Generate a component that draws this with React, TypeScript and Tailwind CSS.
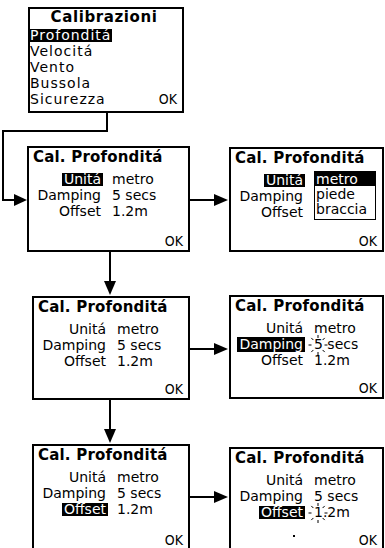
import type { ReactNode } from 'react';

const ff = "font-['DejaVu_Sans',sans-serif]";

type BoxProps = { pos: string; children: ReactNode };

const Box = ({ pos, children }: BoxProps) => (
  <div className={`absolute border-2 border-black bg-white flex flex-col text-black ${pos}`}>{children}</div>
);

const Title = () => (
  <div className="pl-[4px] pt-[1px] text-[15px] leading-[16px] font-bold tracking-[0.2px]">Cal. Profonditá</div>
);

const Ok = () => (
  <div className="mt-auto self-end pr-[5px] pb-[1px] text-[14px] leading-[16px] [font-stretch:condensed]">OK</div>
);

// little "blinking" rays round the digit being edited
const Blink = ({ ch }: { ch: string }) => (
  <span className="relative inline-block">
    {ch}
    <svg className="absolute left-1/2 top-[9px] -translate-x-1/2 -translate-y-1/2" width="22" height="22" viewBox="-11 -11 22 22">
      {[0, 45, 90, 135, 180, 225, 270, 315].map((a) => {
        const r = (a * Math.PI) / 180;
        return (
          <line
            key={a}
            x1={Math.cos(r) * 6.5}
            y1={Math.sin(r) * 7}
            x2={Math.cos(r) * 9.5}
            y2={Math.sin(r) * 10}
            stroke="#000"
            strokeWidth="1"
          />
        );
      })}
    </svg>
  </span>
);

type Field = 'unit' | 'damp' | 'off' | null;

const Label = ({ text, on, tall }: { text: string; on: boolean; tall?: boolean }) => (
  <span
    className={`inline-block px-[2px] ${tall ? 'leading-[15px] h-[15px]' : 'leading-[13px] h-[13px]'} ${on ? 'bg-black text-white' : ''}`}
  >
    {text}
  </span>
);

const Fields = ({ hl, blink }: { hl: Field; blink?: 'damp' | 'off' }) => (
  <div className="mt-[6px] grid grid-cols-[74px_auto] gap-x-[9px] text-[14px] leading-[16px]">
    <div className="text-right"><Label text="Unitá" on={hl === 'unit'} /></div>
    <div>metro</div>
    <div className="text-right"><Label text="Damping" on={hl === 'damp'} tall /></div>
    <div>{blink === 'damp' ? <Blink ch="5" /> : '5'} secs</div>
    <div className="text-right"><Label text="Offset" on={hl === 'off'} /></div>
    <div>{blink === 'off' ? <Blink ch="1" /> : '1'}.2m</div>
  </div>
);

const Dropdown = () => (
  <div className="mt-[6px] grid grid-cols-[74px_auto] gap-x-[9px] text-[14px] leading-[16px]">
    <div className="flex flex-col items-end">
      <div><Label text="Unitá" on /></div>
      <div><Label text="Damping" on={false} tall /></div>
      <div><Label text="Offset" on={false} /></div>
    </div>
    <div className="w-[62px] border-[1.5px] border-black flex flex-col -mt-[1px]">
      <div className="bg-black text-white pl-[1px] leading-[14px]">metro</div>
      <div className="pl-[1px] leading-[16px]">piede</div>
      <div className="pl-[1px] leading-[15px]">braccia</div>
    </div>
  </div>
);

export default function App() {
  return (
    <div className={`relative w-[385px] h-[548px] overflow-hidden bg-white ${ff}`}>
      {/* connectors */}
      <svg className="absolute inset-0" width="385" height="548" viewBox="0 0 385 548">
        <g stroke="#000" strokeWidth="2" fill="none">
          <polyline points="107,113 107,131 3,131 3,200 16,200" />
          <line x1="190" y1="200" x2="216" y2="200" />
          <line x1="110" y1="252" x2="110" y2="283" />
          <line x1="190" y1="349" x2="216" y2="349" />
          <line x1="110" y1="400" x2="110" y2="431" />
          <line x1="190" y1="497" x2="216" y2="497" />
        </g>
        <g fill="#000">
          <polygon points="14,194 27,200 14,206" />
          <polygon points="214,194 228,200 214,206" />
          <polygon points="104,281 110,295 116,281" />
          <polygon points="214,343 228,349 214,355" />
          <polygon points="104,429 110,443 116,429" />
          <polygon points="214,491 228,497 214,503" />
        </g>
      </svg>

      <Box pos="left-[28px] top-[7px] w-[156px] h-[106px]">
        <div className="text-center text-[15px] leading-[16px] font-bold tracking-[0.6px] pr-[4px]">Calibrazioni</div>
        <div className="mt-[2px] text-[14px] leading-[16px] tracking-[1px]">
          <div><span className="inline-block bg-black text-white leading-[13px] h-[13px] pr-[1px]">Profonditá</span></div>
          <div>Velocitá</div>
          <div>Vento</div>
          <div>Bussola</div>
          <div className="flex items-end justify-between">
            <span>Sicurezza</span>
            <span className="pr-[5px] tracking-normal [font-stretch:condensed]">OK</span>
          </div>
        </div>
      </Box>

      <Box pos="left-[27px] top-[146px] w-[163px] h-[106px]">
        <Title />
        <Fields hl="unit" />
        <Ok />
      </Box>

      <Box pos="left-[229px] top-[147px] w-[155px] h-[105px]">
        <Title />
        <Dropdown />
        <Ok />
      </Box>

      <Box pos="left-[32px] top-[296px] w-[158px] h-[104px]">
        <Title />
        <Fields hl={null} />
        <Ok />
      </Box>

      <Box pos="left-[229px] top-[295px] w-[155px] h-[104px]">
        <Title />
        <Fields hl="damp" blink="damp" />
        <Ok />
      </Box>

      <Box pos="left-[32px] top-[444px] w-[158px] h-[107px]">
        <Title />
        <Fields hl="off" />
        <Ok />
      </Box>

      <Box pos="left-[229px] top-[447px] w-[155px] h-[104px]">
        <Title />
        <Fields hl="off" blink="off" />
        <div className="relative mt-auto flex flex-col">
          <span className="absolute left-[62px] bottom-[12px] w-[2px] h-[2px] bg-black" />
          <Ok />
        </div>
      </Box>
    </div>
  );
}
